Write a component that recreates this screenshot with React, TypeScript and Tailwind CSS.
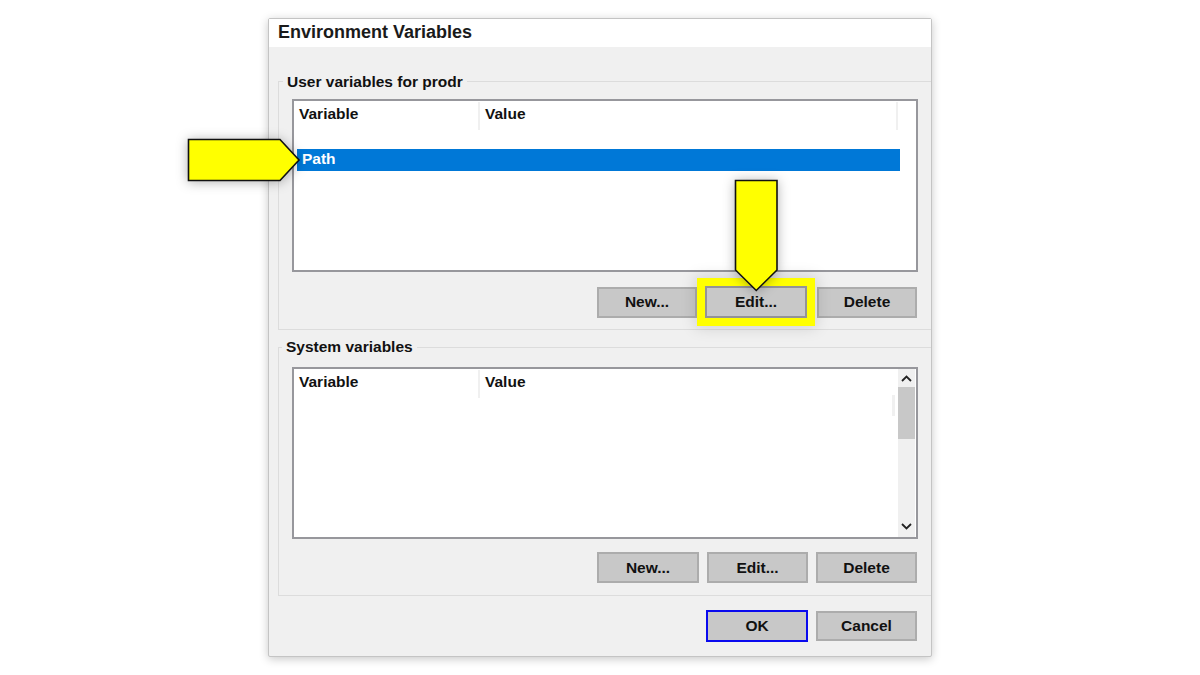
const font = "[font-family:'Liberation_Sans',Arial,sans-serif]";

function Btn({ label, extra = "w-[101px] h-[31px]", primary = false, highlighted = false }: { label: string; extra?: string; primary?: boolean; highlighted?: boolean }) {
  return (
    <div className={`${extra} shrink-0 flex items-center justify-center bg-[#c8c8c8] border-2 text-[15.5px] font-bold text-[#111] ${primary ? "border-[#0a0aee]" : highlighted ? "border-[#939397]" : "border-[#acacac]"} ${highlighted ? "relative outline-[8px] outline-[#ffff00] shadow-[0_0_14px_10px_rgba(0,0,0,0.13)]" : ""}`}>
      {label}
    </div>
  );
}

function Header({ endLine = false }: { endLine?: boolean }) {
  return (
    <div className="flex h-[28px] text-[15.5px] font-bold text-[#111] mt-[1px]">
      <div className="w-[186px] pl-[5px] border-r-2 border-[#f0f0f0]">Variable</div>
      <div className={`w-[418px] pl-[5px] ${endLine ? "border-r-2 border-[#f0f0f0]" : ""}`}>Value</div>
    </div>
  );
}

function Group({ title, legend, pad, children, bottom }: { title: string; legend: string; pad: string; children: React.ReactNode; bottom: React.ReactNode }) {
  return (
    <div className={`relative h-[249px] ml-[9px] border-t border-b border-l border-[#dcdcdc] pl-[13px] ${pad}`}>
      <div className={`absolute bg-[#f0f0f0] px-[4px] text-[15.5px] leading-[18px] font-bold text-[#111] ${legend}`}>{title}</div>
      {children}
      {bottom}
    </div>
  );
}

export default function App() {
  return (
    <div className={`relative w-[1200px] h-[675px] overflow-hidden bg-white pt-[18px] ${font}`}>
      <div className="w-[664px] h-[639px] mx-auto bg-[#f0f0f0] border border-[#c4c4c4] shadow-[0_2px_10px_rgba(0,0,0,0.22)] rounded-[2px]">
        <div className="h-[28px] bg-white pl-[9px] text-[18px] leading-[27px] font-bold text-[#1a1a1a]">Environment Variables</div>
        <div className="pt-[34px]">
          <Group
            title="User variables for prodr"
            legend="-top-[9px] left-[4px]"
            pad="pt-[17px]"
            bottom={
              <div className="flex items-center justify-end w-[625px] mt-[14px] gap-[8px]">
                <Btn label="New..." extra="w-[100px] h-[31px]" />
                <Btn label="Edit..." extra="w-[102px] h-[32px] mr-[2px]" highlighted />
                <Btn label="Delete" extra="w-[100px] h-[31px]" />
              </div>
            }
          >
            <div className="w-[626px] h-[173px] bg-white border-2 border-[#97979c]">
              <Header endLine />
              <div className="h-[22px] w-[603px] ml-[3px] mt-[19px] bg-[#0078d7] text-white text-[15.5px] leading-[20px] font-bold pl-[5px]">Path</div>
            </div>
          </Group>
          <div className="h-[17px]" />
          <Group
            title="System variables"
            legend="-top-[10px] left-[3px]"
            pad="pt-[19px]"
            bottom={
              <div className="flex w-[625px] justify-end mt-[13px] gap-[8px]">
                <Btn label="New..." extra="w-[102px] h-[31px]" />
                <Btn label="Edit..." />
                <Btn label="Delete" />
              </div>
            }
          >
            <div className="relative flex w-[626px] h-[172px] bg-white border-2 border-[#97979c]">
              <div className="flex-1">
                <Header />
              </div>
              <div className="absolute left-[598px] top-[26px] w-[3px] h-[21px] bg-[#f0f0f0]" />
              <div className="w-[17px] mr-[1px] bg-[#f0f0f0] flex flex-col items-center">
                <div className="h-[18px] flex items-center justify-center">
                  <svg width="11" height="7" viewBox="0 0 11 7" fill="none" stroke="#222" strokeWidth="1.8"><path d="M1 6l4.5-4.5L10 6" /></svg>
                </div>
                <div className="w-[17px] h-[52px] bg-[#c8c8c8]" />
                <div className="flex-1" />
                <div className="h-[21px] flex items-center justify-center">
                  <svg width="11" height="7" viewBox="0 0 11 7" fill="none" stroke="#222" strokeWidth="1.8"><path d="M1 1l4.5 4.5L10 1" /></svg>
                </div>
              </div>
            </div>
          </Group>
          <div className="flex justify-end w-[648px] mt-[14px] gap-[8px]">
            <Btn label="OK" extra="w-[102px] h-[32px]" primary />
            <Btn label="Cancel" extra="w-[101px] h-[30px] mt-[1px]" />
          </div>
        </div>
      </div>

      {/* left arrow */}
      <svg className="absolute left-[186px] top-[137px] drop-shadow-[0_1px_6px_rgba(0,0,0,0.3)]" width="116" height="46" viewBox="0 0 116 46">
        <path d="M2.5 2.5H94L113 23L94 43.5H2.5Z" fill="#ffff00" stroke="#111" strokeWidth="1.6" strokeLinejoin="miter" />
      </svg>
      {/* down arrow */}
      <svg className="absolute left-[733px] top-[178px] drop-shadow-[0_1px_6px_rgba(0,0,0,0.3)]" width="47" height="115" viewBox="0 0 47 115">
        <path d="M2.5 2.5H44V92L23.25 112.5L2.5 92Z" fill="#ffff00" stroke="#111" strokeWidth="1.6" />
      </svg>
    </div>
  );
}
